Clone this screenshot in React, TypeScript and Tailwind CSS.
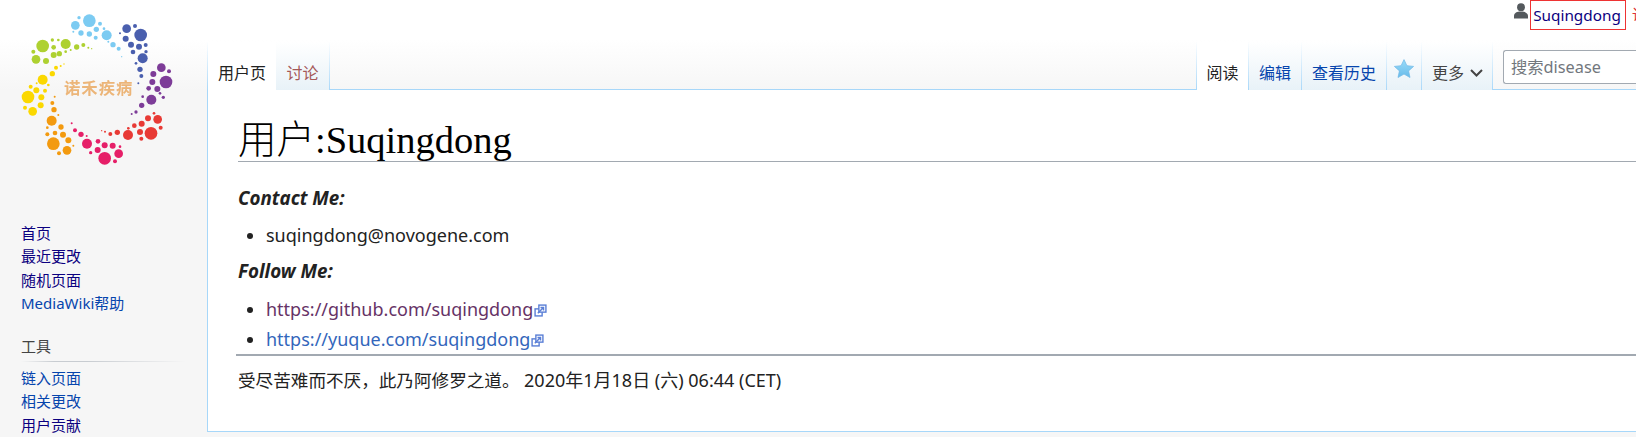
const sans = "font-['Noto_Sans','Noto_Sans_CJK_SC',sans-serif]";

type C = [number, number, number];
const groups: { color: string; dots: C[] }[] = [
  { color: "#7ccbf2", dots: [[268,62,19],[226,76,13],[320,106,15],[243,99,8],[268,102,8],[289,88,8],[300,71,6],[237,53,5],[287,113,6],[339,134,8],[312,86,4],[356,146,6],[220,95,3],[325,125,3],[365,170,2]] },
  { color: "#4a5fae", dots: [[422,105,19],[380,86,13],[428,175,15],[377,116,9],[393,134,9],[417,140,9],[437,135,6],[399,156,7],[405,78,6],[420,208,8],[438,155,5],[424,228,6],[408,190,4],[415,250,3],[360,100,3]] },
  { color: "#7d3c98", dots: [[498,246,19],[484,203,13],[454,299,15],[460,222,9],[457,246,9],[472,267,9],[446,265,7],[507,214,6],[425,316,8],[490,292,5],[408,336,5],[428,290,4],[395,342,3],[480,280,4]] },
  { color: "#e83a35", dots: [[453,400,19],[473,358,13],[384,405,15],[444,355,9],[425,371,9],[420,396,9],[403,377,7],[482,383,6],[352,397,8],[424,416,6],[331,402,6],[462,340,4],[385,385,4],[315,395,3],[305,392,2]] },
  { color: "#e61f68", dots: [[314,475,19],[356,461,13],[261,431,15],[338,437,9],[314,436,9],[293,450,9],[294,424,7],[345,484,6],[243,403,8],[272,458,5],[225,391,6],[360,440,4],[215,370,3],[260,408,3]] },
  { color: "#f39a0f", dots: [[160,431,19],[201,451,13],[155,362,15],[205,421,9],[189,404,9],[165,399,7],[183,381,8],[177,460,6],[162,329,8],[142,403,6],[157,309,6],[142,383,4],[220,437,3],[164,290,3],[175,345,3]] },
  { color: "#fbd800", dots: [[84,291,19],[98,334,13],[128,239,15],[122,316,9],[124,292,9],[109,271,9],[92,260,6],[75,323,6],[157,221,8],[135,272,6],[168,203,6],[145,255,4],[110,250,3],[182,198,3],[192,192,2]] },
  { color: "#aed131", dots: [[128,138,19],[108,178,13],[197,132,15],[138,183,9],[161,165,9],[161,142,7],[178,161,8],[230,141,8],[100,155,6],[157,120,5],[250,135,6],[175,120,4],[197,155,4],[265,143,3],[212,150,3],[275,146,2]] },
];

function Logo() {
  return (
    <svg viewBox="0 0 630 540" className="block w-[210px] h-[180px] shrink-0 blur-[0.5px]">
      {groups.map((g) =>
        g.dots.map(([x, y, r]) => <circle key={`${g.color}${x}${y}`} cx={x} cy={y} r={r} fill={g.color} />)
      )}
      <text x="192" y="282" fontSize="49" fontWeight="700" fill="#ecb578" fontFamily="'Noto Sans CJK SC', sans-serif" letterSpacing="3">诺禾疾病</text>
    </svg>
  );
}

function ExtIcon() {
  return (
    <svg viewBox="0 0 12 12" className="inline-block w-[13px] h-[13px] ml-[1px] align-[-1px]" fill="none" stroke="#5a7fd6" strokeWidth="1.3">
      <rect x="1" y="4.5" width="6.5" height="6.5" fill="#fff" />
      <rect x="4.5" y="1" width="6.5" height="6.5" fill="#fff" />
      <path d="M3.5 8.5 L8.5 3.5 M6 3.2 H8.8 V6" />
    </svg>
  );
}

function Sidebar() {
  const a = "text-[#0b0080]";
  const b = "text-[#0645ad]";
  return (
    <aside className={`w-[207px] shrink-0 ${sans} text-[15px] leading-[23.4px]`}>
      <Logo />
      <ul className="pl-[21px] mt-[42px]">
        <li className={a}>首页</li>
        <li className={a}>最近更改</li>
        <li className={a}>随机页面</li>
        <li className={b}>MediaWiki帮助</li>
      </ul>
      <div className="pl-[21px] mt-[19px] text-[#444]">工具</div>
      <div className="ml-[21px] mt-[3px] mb-[5px] w-[165px] h-px bg-[linear-gradient(to_right,#f6f6f6,#c8ccd1_20%,#c8ccd1_40%,#f6f6f6)]" />
      <ul className="pl-[21px]">
        <li className={b}>链入页面</li>
        <li className={b}>相关更改</li>
        <li className={a}>用户贡献</li>
      </ul>
    </aside>
  );
}

const fade = "[border-image:linear-gradient(to_bottom,#ffffff,#a7d7f9)_1]";
const tabBg = "bg-[linear-gradient(to_bottom,#ffffff,#e8f2f8)]";

function Tab({ label, color, w, active }: { label: string; color: string; w: string; active?: boolean }) {
  return (
    <div
      className={`${w} h-full flex items-center justify-center pt-[13px] text-[16px] ${color} ${
        active ? "bg-white relative z-10" : `${tabBg} border-r ${fade}`
      }`}
    >
      {label}
    </div>
  );
}

function Header() {
  return (
    <>
      <div className={`h-[42px] flex justify-end items-start ${sans}`}>
        <svg viewBox="0 0 16 16" className="w-[16px] h-[16px] mt-[3px] mr-[1px] shrink-0" fill="#54595d">
          <circle cx="8" cy="4.2" r="3.9" />
          <path d="M1 15.5 V13 C1 10 4 8.6 8 8.6 C12 8.6 15 10 15 13 V15.5 Z" />
        </svg>
        <div className="h-[30px] w-[96px] border border-[#ee3333] flex items-center justify-center pr-[2px] shrink-0 text-[#0b0080] text-[15.3px]">
          Suqingdong
        </div>
        <div className="ml-[6px] mr-[-26px] w-[30px] shrink-0 text-[#dd3333] text-[15px] leading-[28px] whitespace-nowrap">讨论</div>
      </div>
      <div className={`h-[48px] flex justify-between ${sans}`}>
        <div className={`flex h-full border-l ${fade}`}>
          <Tab label="用户页" color="text-[#222]" w="w-[68px]" active />
          <Tab label="讨论" color="text-[#a55858]" w="w-[54px]" />
        </div>
        <div className="flex h-full">
          <div className={`w-px h-full border-l ${fade}`} />
          <Tab label="阅读" color="text-[#222]" w="w-[51px]" active />
          <div className={`w-px h-full border-l ${fade}`} />
          <Tab label="编辑" color="text-[#0645ad]" w="w-[53px]" />
          <Tab label="查看历史" color="text-[#0645ad]" w="w-[85px]" />
          <div className={`w-[35px] h-full flex items-center justify-center pt-[4px] ${tabBg} border-r ${fade}`}>
            <svg viewBox="0 0 20 19" className="w-[20px] h-[19px]">
              <defs>
                <linearGradient id="starFill" x1="0" y1="0" x2="0" y2="1">
                  <stop offset="0" stopColor="#9adcf9" />
                  <stop offset="1" stopColor="#68bbea" />
                </linearGradient>
              </defs>
              <path d="M10 0.6 L12.9 6.7 L19.6 7.4 L14.6 11.9 L16 18.5 L10 15.1 L4 18.5 L5.4 11.9 L0.4 7.4 L7.1 6.7 Z" fill="url(#starFill)" stroke="#6fb8e6" strokeWidth="0.7" />
            </svg>
          </div>
          <div className={`w-[71px] h-full flex items-center pl-[10px] gap-[6px] pt-[13px] text-[16px] text-[#444] ${tabBg} border-r ${fade}`}>
            更多
            <svg viewBox="0 0 13 8" className="w-[13px] h-[8px] mt-[1px]" fill="none" stroke="#444" strokeWidth="2">
              <path d="M1 1 L6.5 6.5 L12 1" />
            </svg>
          </div>
          <div className="ml-[10px] mt-[8px] w-[133px] h-[34px] bg-white border border-r-0 border-[#a2a9b1] rounded-l-[3px] flex items-center pl-[7px] pt-px text-[16.3px] text-[#72777d] whitespace-nowrap overflow-hidden">
            搜索disease
          </div>
        </div>
      </div>
    </>
  );
}

function Body() {
  return (
    <main className={`-mt-px h-[343px] bg-white border border-r-0 border-[#a7d7f9] pl-[30px] text-[#222] ${sans}`}>
      <h1 className="mt-[12px] h-[60px] border-b border-[#a2a9b1] text-[38.5px] leading-[76px] text-black font-['Liberation_Serif','Noto_Sans_CJK_SC',serif]">
        <span className="font-light">用户</span>:Suqingdong
      </h1>
      <p className="mt-[22px] text-[18.8px] leading-[28px] font-bold italic">Contact Me:</p>
      <ul className="mt-[9px] pl-[28px] list-disc marker:text-[#222] text-[18px] leading-[28px]">
        <li>suqingdong@novogene.com</li>
      </ul>
      <p className="mt-[8px] text-[18.8px] leading-[28px] font-bold italic">Follow Me:</p>
      <ul className="mt-[9px] pl-[28px] list-disc marker:text-[#222] text-[18px] leading-[30px]">
        <li className="text-[#663366]"><span>https://github.com/suqingdong</span><ExtIcon /></li>
        <li className="text-[#3366bb]"><span>https://yuque.com/suqingdong</span><ExtIcon /></li>
      </ul>
      <hr className="h-[2px] -ml-[2px] bg-[#a2a9b1] border-0" />
      <p className="mt-[12px] text-[17.6px] leading-[24px]">受尽苦难而不厌，此乃阿修罗之道。 <span className="text-[18px]">2020年1月18日 (六) 06:44 (CET)</span></p>
    </main>
  );
}

export default function App() {
  return (
    <div className="w-[1636px] h-[437px] overflow-hidden flex bg-[linear-gradient(to_bottom,#ffffff_40px,#f6f6f6_90px)]">
      <Sidebar />
      <div className="flex-1 min-w-0">
        <Header />
        <Body />
      </div>
    </div>
  );
}
